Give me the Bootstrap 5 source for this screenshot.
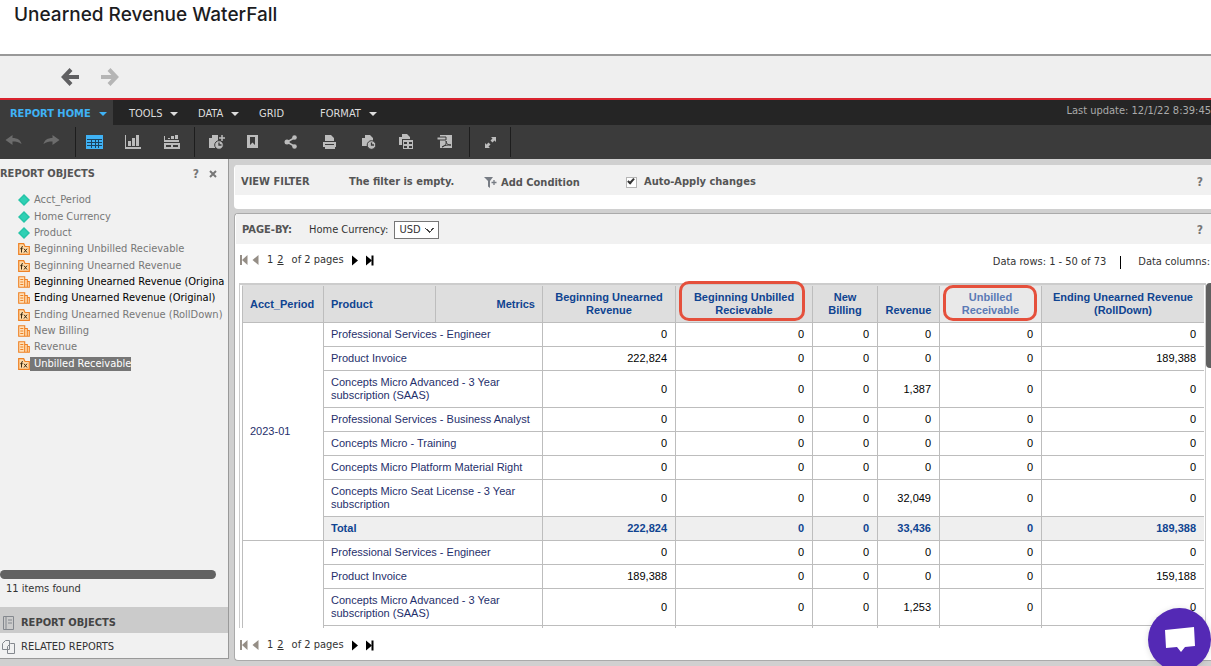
<!DOCTYPE html>
<html lang="en">
<head>
<meta charset="utf-8">
<meta name="viewport" content="width=device-width, initial-scale=1">
<title>Unearned Revenue WaterFall</title>
<link href="https://cdn.jsdelivr.net/npm/bootstrap@5.3.0/dist/css/bootstrap.min.css" rel="stylesheet">
<style>
body{font-family:"DejaVu Sans Condensed","Noto Sans",sans-serif;font-size:11px;line-height:16px;color:#333;background:#e8e8ec}
.app{height:100vh;overflow:hidden}
.title-bar{height:56px;padding:2px 14px;border-bottom:2px solid #999;background:#fff}
.title-bar h1{font-family:Inter,sans-serif;font-size:19px;line-height:25px;font-weight:500;color:#1c1c1e}
.history{height:44px;background:#efefef;border-bottom:2px solid #d9232e;padding-left:61px;gap:20px}
.plain{border:0;background:none;padding:0;color:inherit;line-height:1;display:flex}
svg{display:block;flex:none}
.menu-bar{height:25px;background:#252525;color:#ddd}
.menu-bar a{color:inherit;text-decoration:none;display:flex;align-items:center;padding-top:2px;height:25px;gap:8px}
.menu-bar .m-home{width:113px;background:#3b3b3b;color:#3fb2f5;font-weight:700;padding-left:10px}
.caret{border:4px solid transparent;border-top-color:currentColor;border-bottom:0;width:0;height:0}
.menu-bar .m-tools{width:85px;padding-left:16px}.m-data{width:61px}.m-grid{width:61px}
.updated{color:#aaa;padding-bottom:4px}
.tool-bar{height:34px;background:#3b3b3b;color:#bcbcbc}
.tool-bar .grp{height:30px;display:flex;align-items:center;border-right:1px solid #1d1d1d}
.tool-bar button{justify-content:center}
.g-undo{width:76px;gap:21px;padding:0 0 4px 5px;color:#6c6c6c}
.g-view{width:119px;gap:21px;padding-left:10px}
.g-file{width:275px;gap:21px;padding-left:13px}
.g-full{width:41px;justify-content:center}
.workspace{background:#d0d0d0;padding-bottom:5px;min-height:0}
.side{width:229px;background:#f1f1f1;border-right:1px solid #999;border-bottom:1px solid #999;margin-bottom:2px}
.side-head{height:25px;padding:4px 11px 0 0;gap:10px}
.heading{font-weight:700;color:#555}
.objects{height:180px;margin:8px 4px 0 18px;color:#777}
.objects li{flex:1 1 0;display:flex;align-items:center;white-space:nowrap}
.objects span{padding-left:4px;line-height:14px}
.objects .used{color:#000}
.objects .picked span{background:#767676;color:#fff}
.hbar{height:9px;width:216px;border-radius:5px;background:#626262}
.found{height:28px;padding:2px 6px}
.tab-row{height:25px;padding:2px 0 0 2px;gap:6px;color:#333}
.tab-row.on{background:#cbcbcb;font-weight:700;height:26px;padding-top:5px;color:#444}
.main-area{padding:6px 0 0 5px;min-width:0}
.filter{height:44px;background:#fff;border-radius:4px 0 0 4px;margin-bottom:4px;overflow:hidden}
.strip{background:#f1f1f1;height:30px;margin-left:1px;padding:3px 8px 0 6px}
.filter .strip{color:#555;font-weight:700;padding-top:4px}
.w-title{width:108px}.w-empty{width:135px}.w-add{width:142px}
.tick{appearance:none;width:11px;height:11px;border:1px solid #b5b5b5;background:#fff;margin:0 7px 0 0;position:relative}
.tick:checked::after{content:"";position:absolute;left:2px;top:-1px;width:4px;height:7px;border:solid #333;border-width:0 2px 2px 0;transform:rotate(42deg)}
.help{color:#777;font-weight:700;font-size:12px}
.report{background:#fff;border:1px solid #aaa;border-right:0;border-radius:4px 0 0 4px;min-height:0}
.report .strip{gap:17px;padding-top:2px}
.pick{gap:6px}
.usd{width:45px;height:18px;border:1px solid #767676;background:#fff;padding:0 4px;color:#333;font-size:11px;appearance:none;
background-image:linear-gradient(45deg,transparent 44%,#444 44%,#444 60%,transparent 60%),linear-gradient(-45deg,transparent 44%,#444 44%,#444 60%,transparent 60%);background-size:5px 5px;background-repeat:no-repeat;background-position:30px 6px,34px 6px}
.pager{height:30px;padding:2px 0 0 5px}
.pager.foot{height:32px}
.pager a{color:inherit}
.pager .gap-l{padding:0 8px}
.scroller{padding:9px 0 0 4px;overflow:hidden;min-height:0}
.frame{border:solid #ccc;border-width:2px 1px 0 1px;padding:0 1px 0 2px;flex:1 1 0;min-width:0}
.grid-t{font-family:"Liberation Sans",Arial,sans-serif;font-size:11px;line-height:13px;width:100%;table-layout:fixed;border-collapse:collapse;color:#000}
.grid-t th,.grid-t td{border:1px solid #bdbdbd;padding:5px 7px;border-right:0}
.grid-t td{padding-right:8px}
.grid-t thead th{background:#dedede;color:#0f4491;font-weight:700;text-align:center;vertical-align:bottom;border-top-color:#dedede;position:relative}
.grid-t thead th.mid{vertical-align:middle;text-align:left}
.grid-t tbody th{font-weight:400;color:#1f2f6b}
.grid-t td{text-align:right;vertical-align:middle}
.grid-t .total td,.grid-t .total th.p{background:#efefef;color:#0f4491;font-weight:700}
.grid-t thead .hot{background:#e9e9e9;color:#5a7ab5}
.ring{position:absolute;border:3px solid #e5503c;border-radius:10px;inset:-5px 7px 1px 3px}
.hot .ring{inset:-1px 4px 1px 3px}
.vbar{width:5px;height:85px;background:#606060;border-radius:4px 0 0 4px}
.bar-sep{height:13px;width:1px;background:#000;margin:0 17px 0 14px}
.counts{padding:6px 1px 0 0}
.chat{position:fixed;right:0;bottom:-5px;width:63px;height:63px;border-radius:50%;border:0;background:#5429b5;padding:0;display:flex;align-items:center;justify-content:center;box-shadow:0 1px 6px #0002}
</style>
</head>
<body>
<svg width="0" height="0" class="position-absolute" aria-hidden="true">
<symbol id="dia" viewBox="0 0 12 12"><path d="M6 0l6 6-6 6-6-6z" fill="#25c4a7"/><path d="M6 2l4 4-4 4-4-4z" fill="#2fd0b4"/></symbol>
<symbol id="fx" viewBox="0 0 12 12"><path d="M.7 11.3V.7h5L7 3.5h4.3v7.8z" fill="#ffd9a6" stroke="#ee8124" stroke-width="1.2"/><path d="M5 3.800q-1.500-.6-1.500 1v4.700M2.300 5.700h2.400M6 5.700l3 3.800M9 5.700L6 9.500" fill="none" stroke="#3a2a10" stroke-width="1"/></symbol>
<symbol id="met" viewBox="0 0 12 12"><path d="M.7 11.300V.7h6v10.600zM6.700 3.500h2.600v7.800H6.700zM9.300 5.500h2v5.800h-2z" fill="#ffe0b8" stroke="#ee8124" stroke-width="1.100"/><path d="M2.300 3.500h3M2.300 6h3M2.300 8.500h3" stroke="#ee8124"/></symbol>
<symbol id="funnel" viewBox="0 0 13 11"><path d="M0 0h9L6 4v7L4 9.500V4z" fill="#777c84"/><path d="M7.500 5.500h5M10 3v5" stroke="#777c84" stroke-width="1.300"/></symbol>
<symbol id="first" viewBox="0 0 8 10"><path d="M0 0h2v10H0zM7.500 0v10L2 5z"/></symbol>
<symbol id="prev" viewBox="0 0 6 10"><path d="M6 0v10L0 5z"/></symbol>
<symbol id="next" viewBox="0 0 6 10"><path d="M0 0v10L6 5z"/></symbol>
<symbol id="last" viewBox="0 0 8 10"><path d="M5.500 0h2v10h-2zM0 0v10L6 5z"/></symbol>
</svg>
<div class="app d-flex flex-column">
<header class="title-bar flex-shrink-0"><h1 class="m-0">Unearned Revenue WaterFall</h1></header>
<nav class="history d-flex align-items-center flex-shrink-0" aria-label="History">
<button class="plain" aria-label="Back"><svg width="19" height="18" viewBox="0 0 19 18" fill="none" stroke="#606062" stroke-width="4"><path d="M18 9H4M10 1.500L2.800 9l7.200 7.500"/></svg></button>
<button class="plain" aria-label="Forward"><svg width="19" height="18" viewBox="0 0 19 18" fill="none" stroke="#b5b5b5" stroke-width="4"><path d="M1 9h14M9 1.500L16.200 9 9 16.500"/></svg></button>
</nav>
<nav class="menu-bar d-flex flex-shrink-0">
<a href="#" class="m-home">REPORT HOME <i class="caret"></i></a>
<a href="#" class="m-tools">TOOLS <i class="caret"></i></a>
<a href="#" class="m-data">DATA <i class="caret"></i></a>
<a href="#" class="m-grid">GRID</a>
<a href="#">FORMAT <i class="caret"></i></a>
<span class="updated ms-auto text-nowrap d-flex align-items-center">Last update: 12/1/22 8:39:45</span>
</nav>
<div class="tool-bar d-flex flex-shrink-0 align-items-center">
<div class="grp g-undo">
<button class="plain" aria-label="Undo"><svg width="17" height="11" viewBox="0 0 16 11" fill="currentColor"><path d="M7 0v3c5 0 8 2 9 6-3-2-5-2.500-9-2.500V10L0 5z"/></svg></button>
<button class="plain" aria-label="Redo"><svg width="17" height="11" viewBox="0 0 16 11" fill="currentColor"><path d="M9 0v3C4 3 1 5 0 9c3-2 5-2.500 9-2.500V10l7-5z"/></svg></button>
</div>
<div class="grp g-view">
<button class="plain" aria-label="Grid"><svg width="17" height="14"><path fill="#3fb2f5" d="M0 0h17v14H0z"/><path stroke="#1c4460" d="M1 4.500h15M1 7.500h15M1 10.500h15M5.500 5v8M9.500 5v8M12.500 5v8"/></svg></button>
<button class="plain" aria-label="Graph"><svg width="18" height="16" fill="currentColor"><path d="M1 1h1v12h15v2H1zM4 7h3v5H4zM8 4h3v8H8zM12 1h3v11h-3z"/></svg></button>
<button class="plain" aria-label="Grid and graph"><svg width="18" height="15" fill="currentColor"><path d="M1 1h1v4h14v2H1zM5 3h2v1H5zM8 1h3v3H8zM12 0h3v4h-3zM1 8h16v6H1z"/><path d="M3 11h5M10 11h5" stroke="#3b3b3b" stroke-width="2"/></svg></button>
</div>
<div class="grp g-file">
<button class="plain" aria-label="Schedule"><svg width="17" height="16" fill="currentColor"><path d="M4 1h6v6h3l-5 7H1V4h3z"/><path d="M14 1v6M11 4h6" stroke="currentColor" stroke-width="1.500"/><circle cx="11" cy="11" r="4.300" stroke="#3b3b3b"/><path d="M11 8.500V11h2.500" stroke="#3b3b3b" stroke-width="1.300" fill="none"/></svg></button>
<button class="plain" aria-label="Bookmark"><svg width="17" height="14" fill="currentColor"><path d="M1 0h11v13H1z"/><path d="M4 2h5v8L6.500 7.500 4 10z" fill="#3b3b3b"/></svg></button>
<button class="plain" aria-label="Share"><svg width="17" height="14" fill="currentColor"><path d="M11 2.500L3 7l8 4.500" stroke="currentColor" stroke-width="1.500" fill="none"/><circle cx="10.500" cy="2.500" r="2.300"/><circle cx="3" cy="7" r="2.500"/><circle cx="10.500" cy="11.500" r="2.300"/></svg></button>
<button class="plain" aria-label="Print"><svg width="17" height="14" fill="currentColor"><path d="M3 0h6l3 3v3H3zM1 7h13v5H1z"/><path d="M3 9.500h9" stroke="#3b3b3b"/><path d="M3 12h10v2H3z"/></svg></button>
<button class="plain" aria-label="History list"><svg width="17" height="16" fill="currentColor"><path d="M5 1h5l3 3v8H2V4h3z"/><circle cx="11.500" cy="11" r="4.300" stroke="#3b3b3b"/><path d="M11.500 8.500V11H14" stroke="#3b3b3b" stroke-width="1.300" fill="none"/></svg></button>
<button class="plain" aria-label="Export"><svg width="17" height="16" fill="currentColor"><path d="M4 0h5l3 3v8H1V3h3z"/><path d="M4 5h12v11H4z" fill="#3b3b3b"/><path d="M5 6h10v9H5z"/><path d="M6 8h3v2H6zM11 8h3v2h-3zM6 12h3v2H6zM11 12h3v2h-3z" fill="#3b3b3b"/></svg></button>
<button class="plain" aria-label="PDF"><svg width="17" height="14" fill="currentColor"><path d="M4 0h12v13H4z"/><path d="M1 2h9v3H1z" stroke="#3b3b3b"/><path d="M6 12c3-1 5-4 4-6 0 3 2 4 5 4-4 0-6 0-9 2" stroke="#3b3b3b" fill="none"/></svg></button>
</div>
<div class="grp g-full"><button class="plain" aria-label="Full screen"><svg width="11" height="11" fill="currentColor"><path d="M6 0h5v5L9.500 3.500 7.500 5.500l-2-2 2-2zM5 11H0V6l1.500 1.500 2-2 2 2-2 2z"/></svg></button></div>
</div>
<div class="workspace d-flex flex-fill">
<aside class="side d-flex flex-column flex-shrink-0">
<div class="side-head heading d-flex align-items-center"><span class="me-auto">REPORT OBJECTS</span><button class="plain help">?</button><button class="plain help" aria-label="Close"><svg width="8" height="8" stroke="#777" stroke-width="2"><path d="M1 1l6 6M7 1L1 7"/></svg></button></div>
<ul class="objects list-unstyled d-flex flex-column mb-auto">
<li><svg width="12" height="12"><use href="#dia"/></svg><span>Acct_Period</span></li>
<li><svg width="12" height="12"><use href="#dia"/></svg><span>Home Currency</span></li>
<li><svg width="12" height="12"><use href="#dia"/></svg><span>Product</span></li>
<li><svg width="12" height="12"><use href="#fx"/></svg><span>Beginning Unbilled Recievable</span></li>
<li><svg width="12" height="12"><use href="#fx"/></svg><span>Beginning Unearned Revenue</span></li>
<li class="used"><svg width="12" height="12"><use href="#met"/></svg><span>Beginning Unearned Revenue (Origina</span></li>
<li class="used"><svg width="12" height="12"><use href="#met"/></svg><span>Ending Unearned Revenue (Original)</span></li>
<li><svg width="12" height="12"><use href="#fx"/></svg><span>Ending Unearned Revenue (RollDown)</span></li>
<li><svg width="12" height="12"><use href="#met"/></svg><span>New Billing</span></li>
<li><svg width="12" height="12"><use href="#met"/></svg><span>Revenue</span></li>
<li class="picked"><svg width="12" height="12"><use href="#fx"/></svg><span>Unbilled Receivable</span></li>
</ul>
<div class="hbar"></div>
<div class="found">11 items found</div>
<div class="tab-row on d-flex align-items-center"><svg width="13" height="14" fill="none" stroke="#84888e"><path d="M1.500.5h10v13h-10zM4 0v14M6 4h4M6 7h4"/></svg>REPORT OBJECTS</div>
<div class="tab-row d-flex align-items-center"><svg width="13" height="14" fill="#f1f1f1" stroke="#84888e"><path d="M.5 3.500l3-3h4v9h-7zM5.500 6.500l3-3h4v10h-7z"/></svg>RELATED REPORTS</div>
</aside>
<main class="main-area d-flex flex-column flex-fill">
<section class="filter flex-shrink-0">
<div class="strip d-flex align-items-center"><span class="w-title">VIEW FILTER</span><span class="w-empty">The filter is empty.</span>
<span class="w-add"><button class="plain align-items-center fw-bold"><svg class="me-1" width="13" height="11"><use href="#funnel"/></svg>Add Condition</button></span>
<input class="tick" type="checkbox" id="auto" checked><label for="auto">Auto-Apply changes</label>
<button class="plain help ms-auto">?</button></div>
</section>
<section class="report d-flex flex-column flex-fill">
<div class="strip d-flex align-items-center flex-shrink-0"><span class="heading">PAGE-BY:</span>
<span class="pick d-flex align-items-center"><label for="cur">Home Currency:</label><select id="cur" class="usd"><option>USD</option></select></span>
<button class="plain help ms-auto">?</button></div>
<div class="d-flex align-items-center flex-shrink-0">
<div class="pager d-flex align-items-center"><svg width="8" height="10" fill="#958e86"><use href="#first"/></svg><svg class="ms-1 me-2" width="7" height="10" fill="#958e86"><use href="#prev"/></svg><span class="me-1">1</span><a href="#">2</a><span class="gap-l">of 2 pages</span><svg width="6" height="11"><use href="#next"/></svg><svg class="ms-2" width="8" height="11"><use href="#last"/></svg></div>
<div class="counts ms-auto text-nowrap d-flex align-items-center"><span>Data rows: 1 - 50 of 73</span><span class="bar-sep"></span><span>Data columns:</span></div>
</div>
<div class="scroller d-flex align-items-start flex-fill">
<div class="frame">
<table class="grid-t">
<colgroup><col style="width:81px"><col style="width:112px"><col style="width:107px"><col style="width:133px"><col style="width:137px"><col style="width:65px"><col style="width:62px"><col style="width:102px"><col></colgroup>
<thead><tr><th class="mid">Acct_Period</th><th class="mid">Product</th><th class="mid text-end">Metrics</th><th>Beginning Unearned Revenue</th><th>Beginning Unbilled Recievable<span class="ring"></span></th><th>New Billing</th><th>Revenue</th><th class="hot">Unbilled Receivable<span class="ring"></span></th><th>Ending Unearned Revenue (RollDown)</th></tr></thead>
<tbody>
<tr><th rowspan="8" class="align-middle">2023-01</th><th colspan="2">Professional Services - Engineer</th><td>0</td><td>0</td><td>0</td><td>0</td><td>0</td><td>0</td></tr>
<tr><th colspan="2">Product Invoice</th><td>222,824</td><td>0</td><td>0</td><td>0</td><td>0</td><td>189,388</td></tr>
<tr><th colspan="2">Concepts Micro Advanced - 3 Year subscription (SAAS)</th><td>0</td><td>0</td><td>0</td><td>1,387</td><td>0</td><td>0</td></tr>
<tr><th colspan="2">Professional Services - Business Analyst</th><td>0</td><td>0</td><td>0</td><td>0</td><td>0</td><td>0</td></tr>
<tr><th colspan="2">Concepts Micro - Training</th><td>0</td><td>0</td><td>0</td><td>0</td><td>0</td><td>0</td></tr>
<tr><th colspan="2">Concepts Micro Platform Material Right</th><td>0</td><td>0</td><td>0</td><td>0</td><td>0</td><td>0</td></tr>
<tr><th colspan="2">Concepts Micro Seat License - 3 Year subscription</th><td>0</td><td>0</td><td>0</td><td>32,049</td><td>0</td><td>0</td></tr>
<tr class="total"><th colspan="2" class="p">Total</th><td>222,824</td><td>0</td><td>0</td><td>33,436</td><td>0</td><td>189,388</td></tr>
<tr><th rowspan="4"></th><th colspan="2">Professional Services - Engineer</th><td>0</td><td>0</td><td>0</td><td>0</td><td>0</td><td>0</td></tr>
<tr><th colspan="2">Product Invoice</th><td>189,388</td><td>0</td><td>0</td><td>0</td><td>0</td><td>159,188</td></tr>
<tr><th colspan="2">Concepts Micro Advanced - 3 Year subscription (SAAS)</th><td>0</td><td>0</td><td>0</td><td>1,253</td><td>0</td><td>0</td></tr>
<tr><th colspan="2">&nbsp;</th><td></td><td></td><td></td><td></td><td></td><td></td></tr>
</tbody>
</table>
</div>
<div class="vbar"></div>
</div>
<div class="pager foot d-flex align-items-center flex-shrink-0"><svg width="8" height="10" fill="#958e86"><use href="#first"/></svg><svg class="ms-1 me-2" width="7" height="10" fill="#958e86"><use href="#prev"/></svg><span class="me-1">1</span><a href="#">2</a><span class="gap-l">of 2 pages</span><svg width="6" height="11"><use href="#next"/></svg><svg class="ms-2" width="8" height="11"><use href="#last"/></svg></div>
</section>
</main>
</div>
</div>
<button class="chat" aria-label="Chat"><svg width="32" height="27" fill="#fff"><path d="M1 4l29-3 1 19-10 1-4 5-4-5-11 1z"/></svg></button>
</body>
</html>
